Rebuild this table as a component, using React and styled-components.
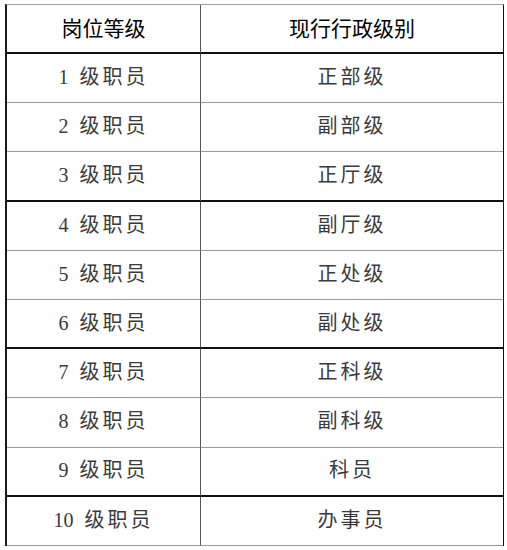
import React from "react";
import styled, { createGlobalStyle } from "styled-components";

const GlobalStyle = createGlobalStyle`
    html, body {
        margin: 0;
        padding: 0;
        background: #fff;
    }
`;

const Page = styled.div`
    padding: 4px 0 0 5px;
`;

const Table = styled.table`
    border-collapse: separate;
    border-spacing: 0;
    border-top: 1px solid #a0a0a0;
    border-left: 2px solid #1a1a1a;
    border-right: 1px solid #111;
    table-layout: fixed;
`;

const HeadCell = styled.th`
    height: 44px;
    padding: 0 0 3px;
    font-family: "Noto Sans CJK SC", sans-serif;
    font-weight: 400;
    font-size: 21px;
    line-height: 1;
    color: #000;
    text-align: center;
    vertical-align: middle;
    border-bottom: 2px solid #111;
    border-right: ${p => (p.$first ? "1px solid #555" : "none")};
    width: ${p => (p.$first ? "193px" : "302px")};
`;

const Cell = styled.td`
    height: ${p => (p.$thick ? "45.2px" : "46.2px")};
    padding: 0 0 2px;
    font-family: "Liberation Serif", "Noto Sans CJK SC", serif;
    font-size: 20px;
    line-height: 1;
    letter-spacing: 3px;
    color: #3a3a3a;
    text-align: center;
    vertical-align: middle;
    border-bottom: ${p => (p.$thick ? "2px solid #111" : "1px solid #9a9a9a")};
    border-right: ${p => (p.$first ? "1px solid #555" : "none")};
`;

const Num = styled.span`
    letter-spacing: 0;
    margin-right: 3px;
`;

const rows = [
    [1, "正部级"],
    [2, "副部级"],
    [3, "正厅级"],
    [4, "副厅级"],
    [5, "正处级"],
    [6, "副处级"],
    [7, "正科级"],
    [8, "副科级"],
    [9, "科员"],
    [10, "办事员"],
];

export default function App() {
    return (
        <Page>
            <GlobalStyle />
            <Table>
                <thead>
                    <tr>
                        <HeadCell $first>岗位等级</HeadCell>
                        <HeadCell>现行行政级别</HeadCell>
                    </tr>
                </thead>
                <tbody>
                    {rows.map(([n, rank], i) => {
                        // every third row closes with a heavy rule
                        const thick = (i + 1) % 3 === 0;
                        return (
                            <tr key={n}>
                                <Cell $first $thick={thick}>
                                    <Num>{n}</Num> 级职员
                                </Cell>
                                <Cell $thick={thick}>{rank}</Cell>
                            </tr>
                        );
                    })}
                </tbody>
            </Table>
        </Page>
    );
}
